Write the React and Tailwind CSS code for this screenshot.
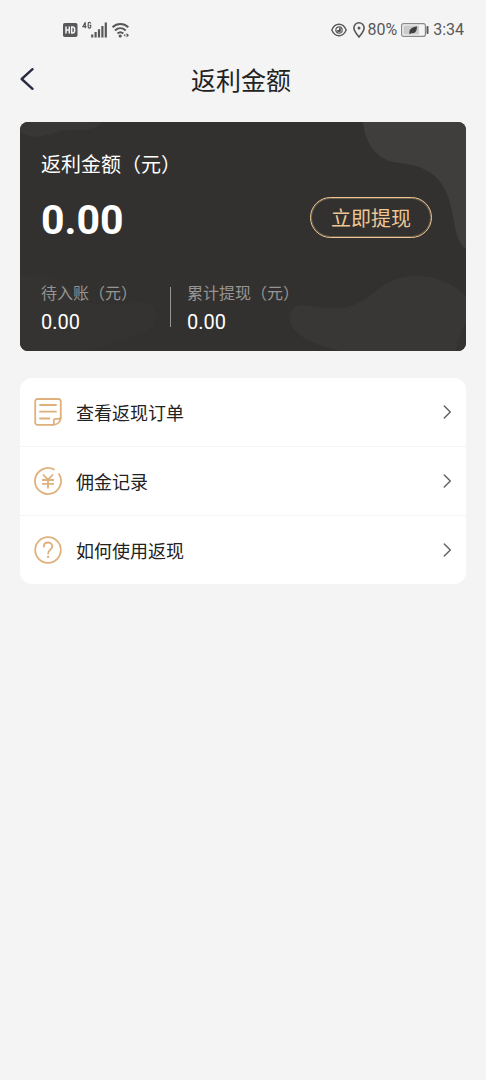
import React from 'react'

const menuItems = [
  { id: 'orders', name: '查看返现订单', icon: OrderIcon },
  { id: 'records', name: '佣金记录', icon: YuanIcon },
  { id: 'help', name: '如何使用返现', icon: HelpIcon }
]

function OrderIcon() {
  return (
    <svg width="28" height="28" viewBox="0 0 28 28" fill="none" stroke="#e0b07c" strokeWidth="1.8" strokeLinecap="round" strokeLinejoin="round">
      <path d="M19.5 26.8H3.6a2.4 2.4 0 0 1-2.4-2.4V3.4A2.4 2.4 0 0 1 3.6 1h20.8a2.4 2.4 0 0 1 2.4 2.4V20" />
      <path d="M26.8 20c-.4 3.8-3 6.4-7.3 6.8.5-1 .3-2.7.3-4.1 0-1.3.6-1.9 1.9-1.9 1.7 0 4.1.2 5.1-.8z" />
      <path d="M6 7h16M6 13.7h16M6 20.5h9.500" />
    </svg>
  )
}

function YuanIcon() {
  return (
    <svg width="28" height="28" viewBox="0 0 28 28" fill="none" stroke="#e0b07c" strokeWidth="1.8" strokeLinecap="round">
      <path d="M19.8 2.4A13 13 0 1 0 25 7.1" />
      <path d="M9.5 8l4.5 4.7L18.5 8M8.7 13h10.600M8.7 16.8h10.600M14 13v7.800" />
    </svg>
  )
}

function HelpIcon() {
  return (
    <svg width="28" height="28" viewBox="0 0 28 28" fill="none" stroke="#e0b07c" strokeWidth="1.8" strokeLinecap="round">
      <circle cx="14" cy="14" r="12.8" />
      <path d="M9.8 10.7c0-2.5 1.8-4.2 4.2-4.2s4.3 1.6 4.3 3.9c0 3-4.2 3.6-4.2 7.100" />
      <circle cx="14.1" cy="20.9" r="1.2" fill="#e0b07c" stroke="none" />
    </svg>
  )
}

function StatusBar() {
  return (
    <div className="flex h-15 items-center justify-between pr-5.5 pl-[63px] text-[#58585a]">
      <svg width="67" height="18" viewBox="0 0 67 18" fill="none" stroke="currentColor">
        <rect x="0" y="2" width="14.5" height="14" rx="1.8" fill="currentColor" stroke="none" />
        <path d="M3 5.500v7M6.300 5.500v7M3 9h3.300M8.700 6v6h1.100c1.200 0 1.900-.8 1.900-3s-.7-3-1.900-3z" stroke="#f4f4f4" strokeWidth="1.5" />
        <path d="M22.300 7.300V1.300L20 5.600h3.500M27.700 2.500c-.2-1.600-2.500-1.600-2.500.2v3c0 1.800 2.500 1.800 2.500 0V4.400h-1.200" strokeWidth="1.2" />
        <path d="M29.200 13.500v2.900M32.600 11v5.400M36 8.300v8.100M39.400 5v11.400M42.800 1.400v15" strokeWidth="2.2" />
        <path d="M49.500 6.200c4.700-4.300 11.100-4.300 15.800 0M52 9.500c3.200-2.900 7.500-2.900 10.700 0M54.500 12.500c1.800-1.600 4-1.600 5.800 0" strokeWidth="2" />
        <circle cx="57.2" cy="15" r="1.6" fill="currentColor" stroke="none" />
        <path d="M63.600 12v4.400l2.400-2.200zM62.300 12.700v3l-1.700-1.500z" fill="currentColor" stroke="none" />
      </svg>
      <div className="flex items-center font-[Roboto,sans-serif] text-base">
        <svg className="mr-1.5" width="16" height="14" viewBox="0 0 16 14" fill="none" stroke="currentColor" strokeWidth="1.4">
          <path d="M.8 7C4-.6 12-.6 15.200 7 12 14.600 4 14.600.8 7z" />
          <circle cx="8" cy="7" r="3.2" strokeWidth="1.2" />
          <path d="M8 4.800a2.200 2.200 0 1 1-2.200 2.200H8z" fill="currentColor" stroke="none" />
        </svg>
        <svg className="mr-0.5" width="12" height="16" viewBox="0 0 12 16" fill="none" stroke="currentColor" strokeWidth="1.6">
          <path d="M6 15C3.500 11.800.9 9 .9 5.900a5.100 5.100 0 0 1 10.200 0C11.100 9 8.500 11.800 6 15z" />
          <circle cx="6" cy="6" r="1.5" fill="currentColor" stroke="none" />
        </svg>
        <span>80%</span>
        <svg className="mr-1 ml-1" width="28" height="14" viewBox="0 0 28 14">
          <rect x=".6" y=".6" width="23.8" height="12.8" rx="2" fill="none" stroke="#8a8a8a" strokeWidth="1.2" />
          <rect x="2.5" y="2.5" width="15.5" height="9" fill="#cbcbcb" />
          <path d="M8.500 11c-.8-4.500 2-7 7.500-7.500 0 5-2.300 7.500-5.700 6.500l-1.200 1.300z" fill="#404040" />
          <rect x="25.5" y="3" width="2" height="8" rx=".8" fill="#58585a" />
        </svg>
        <span>3:34</span>
      </div>
    </div>
  )
}

function CardBackground() {
  return (
    <svg className="absolute inset-0 h-full w-full" viewBox="0 0 446 229" preserveAspectRatio="none">
      <path d="M343 0C345 22 358 40 380 41C410 44 424 58 430 81C435 98 434 118 446 127V0z" fill="#3f3e3c" />
      <path d="M323 229C300 226 270 213 270 198C270 188 273 183 283 183C296 184 306 187 320 186C351 184 358 154 397 154C416 154 436 163 446 175V200L436 229z" fill="#383735" />
      <path d="M446 200C441 208 438 218 436 229H446z" fill="#343331" />
      <path d="M0 10C14 19 28 13 40 9C52 6 72 12 83 0H0z" fill="#383735" />
      <path d="M0 153C30 151 46 160 54 172C68 188 96 180 123 180C135 181 139 192 134 203C122 216 98 216 73 229H0z" fill="#343331" />
    </svg>
  )
}

function RebateCard() {
  return (
    <section className="relative overflow-hidden rounded-lg bg-[#32312f] text-white">
      <CardBackground />
      <div className="relative px-[21px] pt-[27px] pb-[17px]">
        <h2 className="text-xl leading-[30px]">返利金额（元）</h2>
        <div className="mt-[18px] flex items-start justify-between pr-[13px]">
          <span className="font-[Roboto,sans-serif] text-[41px] leading-[46px] font-bold">0.00</span>
          <button className="h-[41px] rounded-full border border-[#efc694] px-5 text-xl leading-none text-[#efc694] ring-1 ring-[#efc694]/30 ring-inset">
            立即提现
          </button>
        </div>
        <div className="mt-[37px] flex items-center">
          <div className="w-[129px]">
            <p className="text-base leading-6 text-[#969593]">待入账（元）</p>
            <p className="mt-1.5 font-[Roboto,sans-serif] text-xl leading-6">0.00</p>
          </div>
          <div className="h-10 w-px bg-[#969593]"></div>
          <div className="ml-4">
            <p className="text-base leading-6 text-[#969593]">累计提现（元）</p>
            <p className="mt-1.5 font-[Roboto,sans-serif] text-xl leading-6">0.00</p>
          </div>
        </div>
      </div>
    </section>
  )
}

function App() {
  return (
    <div className="min-h-screen bg-[#f4f4f4] font-['Noto_Sans_CJK_SC',sans-serif] text-[#222222]">
      <StatusBar />
      <header className="flex h-[38px] items-center pr-6 pl-5">
        <button aria-label="返回" className="w-3.5">
          <svg width="14" height="22" viewBox="0 0 14 22" fill="none" stroke="#2b2b45" strokeWidth="2.4" strokeLinecap="round" strokeLinejoin="round">
            <path d="M12.500 1.200L1.700 11l10.800 9.800" />
          </svg>
        </button>
        <h1 className="flex-1 pr-3.5 text-center text-[25px] leading-9">返利金额</h1>
      </header>

      <main className="px-5 pt-6">
        <RebateCard />
        <nav className="mt-[27px] divide-y divide-[#f4f4f4] overflow-hidden rounded-xl bg-white">
          {menuItems.map(item => (
            <a
              key={item.id}
              href={`#${item.id}`}
              className="flex items-center px-3.5 py-5 text-lg leading-7"
            >
              <item.icon />
              <span className="ml-3.5 flex-1">{item.name}</span>
              <svg width="9" height="14" viewBox="0 0 9 14" fill="none" stroke="#666666" strokeWidth="1.5" strokeLinecap="round" strokeLinejoin="round">
                <path d="M1.300 1l6 6-6 6" />
              </svg>
            </a>
          ))}
        </nav>
      </main>
    </div>
  )
}

export default App
